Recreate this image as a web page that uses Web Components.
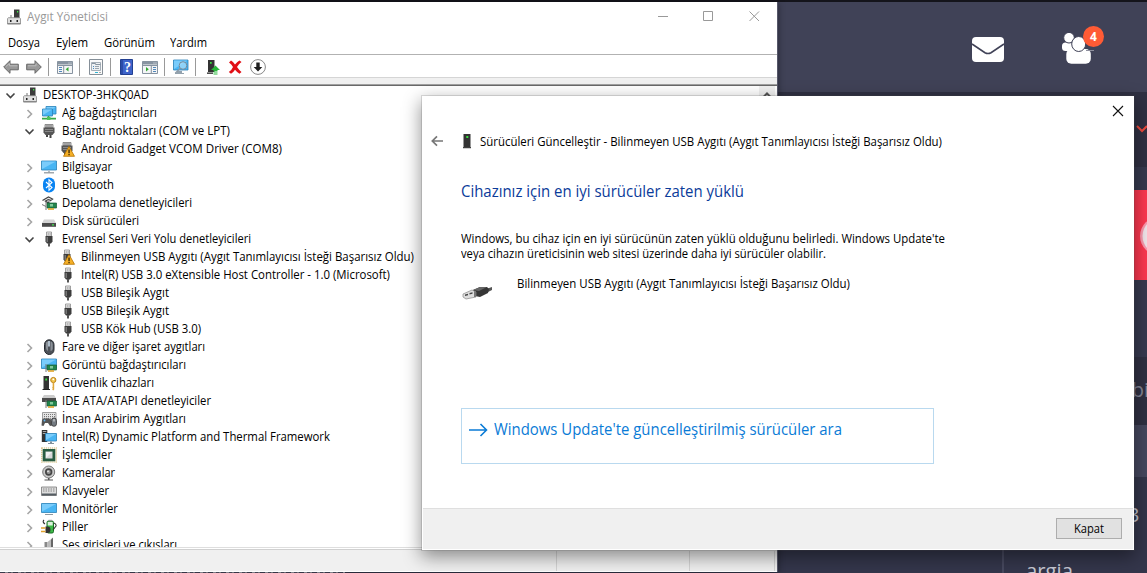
<!DOCTYPE html>
<html lang="tr">
<head>
<meta charset="utf-8">
<title>Aygıt Yöneticisi</title>
<style>
html,body{margin:0;width:1147px;height:573px;overflow:hidden;background:#343549}
body{font-family:"Open Sans","Noto Sans",sans-serif;font-size:12px;color:#000}
</style>
</head>
<body>
<desk-top></desk-top>
<script>
const define=(name,html,setup)=>customElements.define(name,class extends HTMLElement{
  connectedCallback(){
    if(this.shadowRoot)return;
    const r=this.attachShadow({mode:'open'});
    r.innerHTML=typeof html==='function'?html(this):html;
    if(setup)setup(this,r);
  }
});

// Single-line label condensed horizontally to a given pixel width.
define('ui-text','<style>:host{display:block;white-space:pre}span{display:inline-block;transform-origin:0 50%}</style><span><slot></slot></span>',(el,r)=>{
  const s=r.querySelector('span'),w=+el.getAttribute('w');
  if(w){const k=w/s.getBoundingClientRect().width;s.style.transform='scaleX('+k+')';el.style.width=w+'px';}
});

const plug='<path d="M5.5 1h5v4h-5z" fill="#eee" stroke="#8a8a8a" stroke-width=".8"/><path d="M6.7 2.4h1v1.2h-1zM8.6 2.4h1v1.2h-1z" fill="#555"/><path d="M4.5 5h7v5.5l-1.5 2h-4l-1.500-2z" fill="#3d3d3d"/><path d="M5.500 6h1.500v5h-1.500z" fill="#777"/><path d="M7 12h2v3.500H7z" fill="#555"/>';
const serial='<path d="M4 1.500h8v3H4z" fill="#ccc" stroke="#777" stroke-width=".8"/><path d="M5 2.500h6v1H5z" fill="#777"/><path d="M2.500 4.500h11v5l-2 2.500h-7l-2-2.500z" fill="#555"/><path d="M4 6h8v1H4zM4 8h8v1H4z" fill="#888"/><path d="M5 12h2v2h-2zM8.500 12h2v3h-2z" fill="#444"/>';
const warn='<path d="M9 5.500L14.500 15.300H3.500z" fill="#f5b027" stroke="#b87400" stroke-width=".8" stroke-linejoin="round"/><path d="M8.400 8.500h1.300v3.700H8.400zM8.400 13h1.300v1.200H8.400z" fill="#3b2500"/>';
const screen=(x,y,w,h)=>`<path d="M${x} ${y}h${w}v${h}h-${w}z" fill="#49b5f3" stroke="#2b81b8" stroke-width=".8"/><path d="M${x+.5} ${y+.5}h${w-1}L${x+.5} ${y+h-1}z" fill="#7accfb"/>`;
const card='<path d="M6 8h9.500v5H6z" fill="#23854c" stroke="#145c33" stroke-width=".7"/><path d="M9 9h3v2.500H9z" fill="#80c89b"/><path d="M7 13.200h6v1.600H7z" fill="#e0a62c"/><path d="M5 7v8" stroke="#777"/>';
const tower='<path d="M2.500 1h5.500v13h-5.500z" fill="#333"/><path d="M4.300 3.500h1.800v2h-1.800z" fill="#35e23e"/><path d="M1.500 14h7.500v1H1.500z" fill="#222"/>';
const ICONS={
 root:'<path d="M8 .5h5.500v9H8z" fill="#3b3b3b"/><path d="M11 2h1.200v1.500h-1.200z" fill="#3dea47"/><path d="M4 6h2v3H4z" fill="#bbb"/><path d="M2.300 8.700h11.400l.8 1v5.300h-13v-5.300z" fill="#e0e0e0" stroke="#888" stroke-width=".8"/><path d="M1.500 14h13v1.200h-13z" fill="#888"/><path d="M4 11h1.500v2H4zM10.500 11h1.500v2h-1.500z" fill="#222"/>',
 net:screen(5,1.500,10,7.500)+screen(1.500,4,10,7)+'<path d="M7.500 11v2M1 13.700h14" stroke="#37a847" stroke-width="1.700"/><path d="M6 12h3.500v3H6z" fill="#4dc35c"/>',
 serial, serialwarn:'<g transform="translate(-1 0)">'+serial+'</g>'+warn,
 pc:screen(.5,2,15,9)+'<path d="M7 11.500h2v2H7z" fill="#b7bfc5"/><path d="M3 13.200h10v1.200H3z" fill="#8a9298"/>',
 bt:'<rect x="2" y=".5" width="12" height="15" rx="5.800" fill="#0a84f2"/><path d="M5 5l6 5.500-3 2.800V2.700l3 2.800-6 5.500" fill="none" stroke="#fff" stroke-width="1.100"/>',
 storage:'<path d="M1.500 5.500l6-3.500 4 2-2 1.500-2-1-3 1.500 2 1.500 2-.500" fill="none" stroke="#444" stroke-width="1.300"/><path d="M7 4.500l2 2" stroke="#888"/>'+card+'<path d="M1 9l4 2v1l-4-2z" fill="#777"/>',
 disk:'<path d="M3 6.500h10l2 3.500H1z" fill="#d3d3d3"/><path d="M1 10h14v3.800H1z" fill="#4b4b4b"/><path d="M11 11.200h2v1.200h-2z" fill="#42e44f"/>',
 plug, plugwarn:'<g transform="translate(-1 0)">'+plug+'</g>'+warn,
 mouse:'<rect x="3.500" y=".8" width="9.500" height="14.700" rx="4.700" fill="#4c5158" stroke="#262a30"/><path d="M5 3.500q1.500-1.500 2-1v9.500q-2-1-2-3zM9.500 2.500q2 0 2.200 2.500v5q-.5 2-2.200 2z" fill="#8a9097"/><path d="M8 2v5.500" stroke="#cfe2f1" stroke-width="1.500"/>',
 display:screen(.5,2,15,9.500)+card,
 security:tower+'<circle cx="12.300" cy="5" r="2.600" fill="#f2c44d" stroke="#bc8519" stroke-width="1"/><circle cx="12.300" cy="4.300" r=".9" fill="#fff"/><path d="M11.600 7.500h1.600v7l-1 1-1-1 .5-1-.5-1 .5-1z" fill="#e0a638"/>',
 ide:'<path d="M3 2h10l2 3H1z" fill="#ccc"/><path d="M1 5h14v4H1z" fill="#4b4b4b"/>'+card,
 hid:'<path d="M1.500 1.500h13.500v7H1.500z" fill="#e5e5e5" stroke="#888" stroke-width=".8"/><path d="M3 3.500h11M3 5.500h11M3 7.300h11" stroke="#777" stroke-dasharray="1 1"/><path d="M1 9q1-2.500 4-1.500 4-1 5 1.500l1 5.500-2 .5-2-3h-3l-1.500 3-2-.5z" fill="#555"/><circle cx="3.500" cy="9.500" r=".9" fill="#5eb7f4"/><rect x="10.500" y="7" width="5" height="8.300" rx="2.400" fill="#737a81" stroke="#333" stroke-width=".8"/><path d="M13 8v2.500" stroke="#eee"/>',
 dptf:'<path d="M.8 1h5.500v12H.8z" fill="#333"/><path d="M1.800 2.500h3.500M1.800 4.500h3.500" stroke="#aaa"/>'+screen(4.500,4.500,11,7.500)+'<path d="M9 12.500h2v1.500h2v1H7v-1h2z" fill="#81909b"/>',
 cpu:'<path d="M.8 1h14.400v14H.8z" fill="none" stroke="#c3a44c" stroke-width="1.200" stroke-dasharray="1 1"/><path d="M1.700 2h12.600v12.300H1.700z" fill="#285c41"/><path d="M4.500 4.500h7v7h-7z" fill="#d8d8d8"/><path d="M5 5h6l-6 6z" fill="#f1f1f1"/>',
 camera:'<circle cx="7.700" cy="7" r="6" fill="#c9c9c9" stroke="#777"/><circle cx="7.700" cy="7" r="3.700" fill="#444"/><circle cx="7.700" cy="7" r="2" fill="#999"/><circle cx="7" cy="6.300" r=".8" fill="#fff"/><path d="M7 13h1.500v1.500H12v1H3.500v-1H7z" fill="#555"/>',
 keyboard:'<path d="M.5 4h15v8.500H.5z" fill="#ddd" stroke="#777" stroke-width=".8"/><path d="M.8 10.500h14.400v2H.8z" fill="#555d63"/><path d="M2 6h12M2 8h12" stroke="#888" stroke-dasharray="1.500 1"/>',
 monitor:screen(.5,2.500,15,9)+'<path d="M4 13.500h8" stroke="#8e989f"/>',
 battery:'<rect x="6" y="2" width="6.500" height="12" rx="1.500" fill="#3cb947" stroke="#176822"/><path d="M6.700 3h5v3.500h-5z" fill="#ddf1de"/><path d="M7.500.8h3.500v1.500H7.500z" fill="#999"/><path d="M13 4q2.500 1 2 3l-3 4M3 1q-2 2 1 4" fill="none" stroke="#333" stroke-width="1.100"/><path d="M4.500 7.500h2q3 0 3 3.200t-3 3.300h-2z" fill="#333"/><path d="M0 9h4.500M0 12.500h4.500" stroke="#e0a12d" stroke-width="1.500"/>',
 sound:'<path d="M3.500 5h3v7h-3z" fill="#888"/><path d="M6.500 5l5-4v15l-5-4z" fill="#bbb"/><path d="M10 2.500l2-2v15l-2-2z" fill="#666"/>',
 tower:'<path d="M4.500 1h7v13h-7z" fill="#333"/><path d="M7.300 3h2v2h-2z" fill="#3ae143"/><path d="M4 14.200h8v1H4z" fill="#111"/>',
 back:'<path d="M.7 8L7 1.700V5.200h8.300v5.600H7v3.500z" fill="#999" stroke="#666" stroke-width="1"/><path d="M3 7.500l3.500-3v2.300h8" fill="none" stroke="#bbb"/>',
 fwd:'<path d="M15.300 8L9 1.700V5.200H.7v5.600H9v3.500z" fill="#999" stroke="#666" stroke-width="1"/><path d="M2 6.800h8V4.500" fill="none" stroke="#bbb"/>',
 treeview:'<path d="M.5 2.500h15v12H.5z" fill="#f4f5f6" stroke="#8793a0"/><path d="M.5 2.500h15v3H.5z" fill="#8894a1"/><path d="M11.500 4h3" stroke="#e4e8ec" stroke-dasharray="1 1"/><path d="M.500 6.500h15M6.700 6.500V14" stroke="#8793a0"/><path d="M2 8.500h3M2 10.500h3M2 12.500h3" stroke="#5388ba"/><path d="M11.500 8v4.600L8.700 10.300z" fill="#32a832"/>',
 props:'<path d="M1.500.5h13v15h-13z" fill="#fafafa" stroke="#858f98"/><path d="M3.500 3.500h9v8h-9z" fill="#eef1f3" stroke="#a5afb8"/><path d="M4 4.500h3.500v1h5" fill="none" stroke="#8995a1"/><path d="M5 7.500h1M5 9.500h1" stroke="#4d8cc4"/><path d="M7 7.500h4M7 9.500h4" stroke="#9aa5ae"/><path d="M7 13.500h3" stroke="#31b4d1"/><path d="M11 13.500h2" stroke="#aaa"/>',
 actionview:'<path d="M.5 2.500h15v12H.5z" fill="#f4f5f6" stroke="#8793a0"/><path d="M.5 2.500h15v3H.5z" fill="#8894a1"/><path d="M11.500 4h3" stroke="#e4e8ec" stroke-dasharray="1 1"/><path d="M.5 6.500h15M9.300 6.500V14" stroke="#8793a0"/><path d="M11 8.500h3M11 10.500h3M11 12.500h3" stroke="#5388ba"/><path d="M4 8v4.600l2.800-2.300z" fill="#32a832"/>',
 scan:screen(.5,1,14.500,10)+'<path d="M4 12h5v2h2v1H2v-1h2z" fill="#93a2ae"/><circle cx="10" cy="6.500" r="3.800" fill="#a6dcf9" fill-opacity=".75" stroke="#758b9b" stroke-width="1"/><path d="M7.300 9.200l-5 5" stroke="#8a98a4" stroke-width="1.300"/>',
 update:'<path d="M3 1h6.500v12H3z" fill="#333"/><path d="M5 3h1.700v1.700H5z" fill="#3ae143"/><path d="M2 13.500h6v1.300H2z" fill="#222"/><path d="M10.500 6.500l4.500 4.500h-2.500v1h-4v-1H6z" fill="#27b83a"/><path d="M8.500 13h4M8.500 15h4" stroke="#27b83a"/>',
 remove:'<path d="M2 3.500L4 1.500q2 1 4 4 2.500-3 4.500-4L14.500 3q-3 2-4.500 5 2 3 4.500 5l-2 1.700q-2.500-1.500-4.500-4-1.500 2.500-4 4L1.800 13q3-2 4.200-5-1.500-3-4-4.500z" fill="#e10f16"/>',
 disable:'<circle cx="8" cy="8" r="7.400" fill="#fff" stroke="#888"/><path d="M6.300 3.500h3.400v4.500h2.600L8 12.500 3.700 8h2.600z" fill="#1c1c1c"/>'
};
define('dev-icon',el=>`<style>:host{display:block;width:16px;height:16px;flex:none}svg{display:block}</style><svg width="16" height="16" viewBox="0 0 16 16">${ICONS[el.getAttribute('name')]}</svg>`);

define('tree-row',el=>{
  const s=el.getAttribute('state');
  const c=s==='open'?'<path d="M4.500 7.500l4 4 4-4" stroke="#444"/>':s==='closed'?'<path d="M6.500 6l4 4-4 4" stroke="#a6a6a6"/>':'';
  return `<style>:host{display:flex;height:18px;align-items:center;flex:none;padding-left:${2+19*el.getAttribute('level')}px}
  svg{display:block;width:19px;height:18px;margin-right:1px;flex:none}svg path{fill:none;stroke-width:1.600}
  dev-icon{margin-right:5px}ui-text{line-height:18px}</style>
  <svg>${c}</svg><dev-icon name="${el.getAttribute('icon')}"></dev-icon><ui-text w="${el.getAttribute('w')}">${el.getAttribute('label')}</ui-text>`});

const ROWS=[[0,'open','root','DESKTOP-3HKQ0AD',106],[1,'closed','net','Ağ bağdaştırıcıları',95],[1,'open','serial','Bağlantı noktaları (COM ve LPT)',168],[2,'','serialwarn','Android Gadget VCOM Driver (COM8)',201],[1,'closed','pc','Bilgisayar',50],[1,'closed','bt','Bluetooth',52],[1,'closed','storage','Depolama denetleyicileri',130],[1,'closed','disk','Disk sürücüleri',77],[1,'open','plug','Evrensel Seri Veri Yolu denetleyicileri',189],[2,'','plugwarn','Bilinmeyen USB Aygıtı (Aygıt Tanımlayıcısı İsteği Başarısız Oldu)',333],[2,'','plug','Intel(R) USB 3.0 eXtensible Host Controller - 1.0 (Microsoft)',309],[2,'','plug','USB Bileşik Aygıt',88],[2,'','plug','USB Bileşik Aygıt',88],[2,'','plug','USB Kök Hub (USB 3.0)',120],[1,'closed','mouse','Fare ve diğer işaret aygıtları',143],[1,'closed','display','Görüntü bağdaştırıcıları',124],[1,'closed','security','Güvenlik cihazları',92],[1,'closed','ide','IDE ATA/ATAPI denetleyiciler',149],[1,'closed','hid','İnsan Arabirim Aygıtları',124],[1,'closed','dptf','Intel(R) Dynamic Platform and Thermal Framework',268],[1,'closed','cpu','İşlemciler',50],[1,'closed','camera','Kameralar',53],[1,'closed','keyboard','Klavyeler',47],[1,'closed','monitor','Monitörler',56],[1,'closed','battery','Piller',26],[1,'closed','sound','Ses girişleri ve çıkışları',115]];

define('device-tree',`<style>:host{display:flex;height:462px;overflow:hidden;background:#fff;border-top:1px solid #696969;box-sizing:border-box}
 .rows{flex:1;display:flex;flex-direction:column}.sb{width:16px;margin-right:2px;background:#f0f0f0;padding-top:5px;box-sizing:border-box}svg{display:block}</style>
 <div class="rows">${ROWS.map(r=>`<tree-row level="${r[0]}" state="${r[1]}" icon="${r[2]}" label="${r[3]}" w="${r[4]}"></tree-row>`).join('')}</div>
 <div class="sb"><svg width="16" height="8"><path d="M4.500 6l3.500-3.500L11.500 6" fill="none" stroke="#555" stroke-width="2"/></svg></div>`);

define('tool-bar',`<style>:host{display:flex;height:21px;align-items:center;padding:1px 0 0 3px;background:#fff;border-bottom:1px solid #d5d5d5;box-sizing:content-box}
 i{width:1px;height:18px;background:#999;flex:none}</style>
 <dev-icon name="back"></dev-icon><dev-icon name="fwd" style="margin:0 6px 0 7px"></dev-icon><i></i>
 <dev-icon name="treeview" style="margin:0 6px 0 8px"></dev-icon><i></i><dev-icon name="props" style="margin:0 6px 0 8px"></dev-icon><i></i>
 <svg width="14" height="16" viewBox="0 0 14 16" style="margin:0 8px 0 9px;flex:none"><path d="M.5.5h12v15H.5z" fill="#3d63ca" stroke="#223f91"/><path d="M1 1h2v14H1z" fill="#2a4ba8"/><text x="7.500" y="12.700" text-anchor="middle" font-family="Liberation Serif,serif" font-size="14" font-weight="bold" fill="#fff">?</text></svg>
 <dev-icon name="actionview" style="margin-right:6px"></dev-icon><i></i><dev-icon name="scan" style="margin:0 6px 0 8px"></dev-icon><i></i>
 <dev-icon name="update" style="margin:0 6px 0 9px"></dev-icon><dev-icon name="remove" style="margin-right:7px"></dev-icon><dev-icon name="disable"></dev-icon>`);

define('device-manager',`<style>:host{display:flex;flex-direction:column;width:777px;height:570px;background:#fff;box-shadow:0 1px 7px rgba(0,0,0,.4);border-right:1px solid #56576a}
 .title{display:flex;align-items:center;height:30px;padding:0 17px 0 6px;color:#999}.title ui-text{margin:-1px auto 0 5px}
 .title dev-icon{margin-top:-1px}.ctl{margin-top:-2px}
 .menu{display:flex;height:22px;line-height:22px;padding-left:8px;gap:15px;border-bottom:1px solid #b2b2b2}
 .gap{height:6px;background:#f0f0f0;border-bottom:1px solid #a0a0a0}
 .line{height:1px;background:#dedede;margin-bottom:1px}.status{height:22px;border-top:1px solid #d0d0d0;background:#f0f0f0;display:flex;box-sizing:border-box}
 .status b{border-right:1px solid #d4d4d4;box-sizing:border-box;margin-top:1px}</style>
 <div class="title"><dev-icon name="root"></dev-icon><ui-text w="81">Aygıt Yöneticisi</ui-text><svg class="ctl" width="103" height="12" fill="none" stroke="#999"><path d="M1 6.500h10M46.500 1.500h9v9h-9zM92.500 1.500l9.500 9.500M102 1.500L92.500 11"/></svg></div>
 <div class="menu"><ui-text w="32">Dosya</ui-text><ui-text w="32" style="margin-left:1px">Eylem</ui-text><ui-text w="51" style="margin-left:1px">Görünüm</ui-text><ui-text w="37">Yardım</ui-text></div>
 <tool-bar></tool-bar><div class="gap"></div><device-tree></device-tree><div class="line"></div>
 <div class="status"><b style="width:557px"></b><b style="width:133px"></b><b style="width:85px"></b></div>`);

define('update-dialog',`<style>:host{display:flex;flex-direction:column;width:712px;height:454px;background:#fff;box-shadow:0 0 0 1px rgba(80,80,80,.18),0 6px 17px 1px rgba(0,0,0,.42)}
 .top{height:30px;display:flex;justify-content:flex-end;align-items:center;padding-right:10px}
 .head{display:flex;align-items:center;height:30px;margin-bottom:2px;padding-left:8px}.head dev-icon{margin:0 5px 0 15px}
 .body{flex:1;padding-left:39px;display:flex;flex-direction:column;align-items:flex-start}
 .h{font-size:16px;color:#0b3b9a;line-height:24px;margin-top:21px}.p{line-height:15px}.first{margin-top:28px}
 .dev{display:flex;height:32px;margin-top:14px}.dev svg{margin-top:-1px}.dev ui-text{line-height:15px;margin-left:22px;margin-top:1px}
 .link{width:473px;height:56px;box-sizing:border-box;border:1px solid #b9d9ef;display:flex;align-items:flex-start;padding:8px 0 0 7px;margin-top:101px;color:#0a7bd6;font-size:16px;line-height:24px}
 .link svg{margin:5px 6px 0 0}
 .foot{height:42px;border-top:1px solid #dfdfdf;border-bottom:1px solid #fff;background:#f0f0f0;margin:0 1px 0 1px;box-sizing:border-box;display:flex;justify-content:flex-end;padding:9px 11px 0 0}
 button{font:inherit;color:#000;width:66px;height:21px;border:1px solid #adadad;background:#e1e1e1;padding:0;display:grid;place-items:center;border-radius:0}</style>
 <div class="top"><svg width="12" height="12" fill="none" stroke="#111" stroke-width="1.100"><path d="M1 1l10 10M11 1L1 11"/></svg></div>
 <div class="head"><svg width="14" height="12" fill="none" stroke="#777" stroke-width="1.700"><path d="M2 6h11M7 1.300L2.300 6 7 10.700"/></svg><dev-icon name="tower"></dev-icon><ui-text w="462">Sürücüleri Güncelleştir - Bilinmeyen USB Aygıtı (Aygıt Tanımlayıcısı İsteği Başarısız Oldu)</ui-text></div>
 <div class="body"><ui-text class="h" w="283">Cihazınız için en iyi sürücüler zaten yüklü</ui-text>
 <ui-text class="p first" w="484">Windows, bu cihaz için en iyi sürücünün zaten yüklü olduğunu belirledi. Windows Update'te</ui-text>
 <ui-text class="p" w="365">veya cihazın üreticisinin web sitesi üzerinde daha iyi sürücüler olabilir.</ui-text>
 <div class="dev"><svg width="34" height="32"><path d="M20 17l5-2 6-2v3l-6 3z" fill="#555"/><path d="M12 16l7-3h7l2 2-1 4-8 4-5-1z" fill="#363636"/><path d="M12 16l7-3h7l-8 4z" fill="#666"/><path d="M2 20l9-4 4 2v5l-10 2-3-2z" fill="#ddd" stroke="#888" stroke-width=".7"/><path d="M4 20.500l3-.8v1.500l-3 .8zM8.500 19l3-.8v1.500l-3 .8z" fill="#444"/><path d="M13 17l2 1v5h-2z" fill="#777"/></svg><ui-text w="333">Bilinmeyen USB Aygıtı (Aygıt Tanımlayıcısı İsteği Başarısız Oldu)</ui-text></div>
 <div class="link"><svg width="19" height="16" fill="none" stroke="#0a7bd6" stroke-width="1.600"><path d="M0 8h17M11.500 2l6 6-6 6"/></svg><ui-text w="348">Windows Update'te güncelleştirilmiş sürücüler ara</ui-text></div></div>
 <div class="foot"><button><ui-text w="30">Kapat</ui-text></button></div>`);

define('site-page',`<style>:host{display:flex;flex-direction:column;width:1147px;height:573px;background:#34364b;overflow:hidden;font-family:"Open Sans",sans-serif}
 :host>div{flex:none;box-sizing:border-box}.nav{height:92px;border-top:2px solid #14141b;background:#404257;display:flex;padding:28px 0 0 972px;align-items:flex-start}
 .users{position:relative;width:42px;height:36px;margin-left:58px}.badge{position:absolute;left:21px;top:-4px;width:21px;height:21px;border-radius:50%;background:#ff5b35;color:#fff;font-weight:bold;font-size:12px;line-height:21px;text-align:center}
 .r{display:flex;justify-content:flex-end;overflow:hidden}svg{display:block;flex:none}
 .b{display:flex;background:#34364b;position:relative}.v{width:2px;background:#47495f;margin-left:1002px;margin-top:73px}
 .b .n{position:absolute;left:1128px;top:25px;font-size:20px;color:#c3c4d0;line-height:26px}.b .t{font-size:20px;color:#c9cad5;line-height:26px;margin:81px 0 0 22px;white-space:nowrap}
 .s{position:absolute;left:0;bottom:0;width:345px;height:1px;background:repeating-linear-gradient(90deg,#45465a 0 5px,#a5a6b0 5px 8px,#55566a 8px 11px,#8c8d98 11px 13px)}</style>
 <div class="nav"><svg width="32" height="34"><rect y="7" width="32" height="25" rx="4" fill="#fff"/><path d="M0 14l13 8.700q3 1.500 6 0L32 14" fill="none" stroke="#404257" stroke-width="1.600"/></svg>
 <div class="users"><svg width="34" height="36" fill="#fff"><rect y="12.500" width="13" height="8.500" rx="3.500"/><circle cx="7" cy="7.700" r="5.300" stroke="#404257"/><rect x="4.300" y="19" width="24.500" height="14.700" rx="5"/><path d="M24 20.500h8" stroke="#8f909e"/><ellipse cx="16.700" cy="14" rx="7" ry="7.500" stroke="#404257"/></svg><span class="badge">4</span></div></div>
 <div class="r" style="height:75px;background:#303143"><svg width="12" height="75"><path d="M2 34l5 5 5-5" fill="none" stroke="#f04a3d" stroke-width="2"/></svg></div>
 <div style="height:23px;background:#373a4f"></div>
 <div class="r" style="height:90px;background:#ff3850"><svg width="8" height="90"><circle cx="20" cy="46" r="19" fill="#ff9bb0"/><circle cx="22" cy="46" r="18.500" fill="#f4e8ed"/></svg></div>
 <div style="height:77px;background:#383a50"></div>
 <div class="r" style="height:68px;background:#303143;color:#858697;font-size:20px;line-height:66px"><span style="margin-right:-2px">bi</span></div>
 <div style="height:52px;background:#46485f"></div>
 <div class="b" style="height:96px"><span class="n">3</span><div class="v"></div><ui-text class="t" w="47">argia</ui-text><div class="s"></div></div>`);

define('desk-top',`<style>:host{display:block;position:relative;width:1147px;height:573px;overflow:hidden}
 site-page,device-manager,update-dialog{position:absolute}site-page{left:0;top:0}device-manager{left:0;top:2px}update-dialog{left:422px;top:96px}</style>
 <site-page></site-page><device-manager></device-manager><update-dialog></update-dialog>`);
</script>
</body>
</html>
